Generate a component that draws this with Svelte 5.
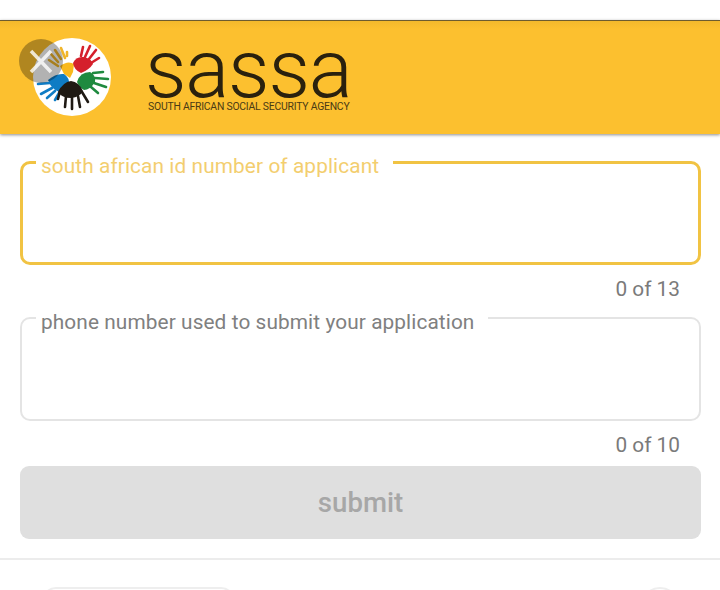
<script>
  const fields = [
    { label: 'south african id number of applicant', count: '0 of 13', active: true },
    { label: 'phone number used to submit your application', count: '0 of 10', active: false }
  ];
</script>

<div class="page">
  <header class="bar">
    <div class="logo">
      <svg viewBox="32 38 80 80" width="80" height="80" aria-hidden="true">
        <circle cx="72" cy="77" r="39" fill="#fff" />
        <g fill="none" stroke-linecap="round">
          <g stroke="#f0b52a" stroke-width="2.6">
            <path d="M58 66 49 60M58 62 51 54M61 59 55 50M65 58 61 48M67 56 67 52" />
          </g>
          <path d="M60 66Q68 60 74 64L73 72 70 78 64 74Z" fill="#f9b91c" />
          <g stroke="#d5202c" stroke-width="2.6">
            <path d="M81 56 83 47M85 57 90 46M89 59 96 50M91 63 99 58" />
          </g>
          <path d="M73 63Q76 56 84 57 92 59 93 64 89 70 81 73 74 70 73 63Z" fill="#d5202c" />
          <g stroke="#1f8a3f" stroke-width="2.6">
            <path d="M93 73 103 72M95 78 108 79M94 83 106 87M91 87 98 93" />
          </g>
          <path d="M77 82Q80 72 90 72 96 75 95 82 90 90 84 90 79 87 77 82Z" fill="#1f8a3f" />
          <g stroke="#0f7cc4" stroke-width="2.6">
            <path d="M50 83 38 84M52 88 41 94M55 91 47 98M59 93 55 100" />
          </g>
          <path d="M48 80Q56 73 64 74 70 78 69 85 63 93 57 91 51 88 48 80Z" fill="#0f7cc4" />
          <g stroke="#1f1a14" stroke-width="2.6">
            <path d="M60 91 58 99M66 96 65 107M72 97 72 109M78 96 80 107M82 92 88 102" />
          </g>
          <path d="M58 92Q63 82 71 81 79 82 83 91 80 97 71 98 62 98 58 92Z" fill="#1f1a14" />
        </g>
      </svg>
      <span class="close">
        <svg viewBox="0 0 44 44" width="44" height="44" aria-hidden="true">
          <path d="M12 12 32 33M32 12 12 33" stroke="#fff" stroke-opacity=".8" stroke-width="3.5" fill="none" />
        </svg>
      </span>
    </div>
    <div class="brand">
      <div class="name">sassa</div>
      <div class="tag">SOUTH AFRICAN SOCIAL SECURITY AGENCY</div>
    </div>
  </header>

  <form class="form" onsubmit={(e) => e.preventDefault()}>
    {#each fields as f}
      <div class="group" class:first={f.active}>
        <fieldset class="box" class:active={f.active}>
          <legend>{f.label}</legend>
          <input type="text" aria-label={f.label} />
        </fieldset>
        <div class="count">{f.count}</div>
      </div>
    {/each}
    <button class="submit" type="submit" disabled>submit</button>
  </form>

  <hr class="rule" />

  <footer class="foot">
    <span class="pill"></span>
    <span class="round"></span>
  </footer>
</div>

<style>
  :global(body) {
    margin: 0;
    background: #fff;
    overflow: hidden;
  }
  .page {
    height: 590px;
    overflow: hidden;
    padding-top: 20px;
    box-sizing: border-box;
    font-family: Roboto, "Liberation Sans", sans-serif;
  }
  .bar {
    height: 114px;
    box-sizing: border-box;
    border-top: 1px solid #6d5c30;
    background: linear-gradient(#f3b92c, #fcc02f 8px);
    box-shadow: 0 1px 3px rgba(0, 0, 0, 0.45);
    display: flex;
    align-items: flex-start;
    padding: 17px 0 0 32px;
  }
  .logo {
    position: relative;
    width: 80px;
    height: 80px;
    flex: none;
  }
  .logo > svg {
    display: block;
  }
  .close {
    position: absolute;
    left: -13px;
    top: 1px;
    width: 44px;
    height: 44px;
    border-radius: 50%;
    background: rgba(0, 0, 0, 0.3);
  }
  .close svg {
    display: block;
  }
  .brand {
    margin-left: 36px;
    color: #2a210e;
  }
  .name {
    font-size: 82px;
    font-weight: 300;
    line-height: 63px;
    height: 63px;
    letter-spacing: -1.2px;
    margin-left: -3px;
    white-space: nowrap;
  }
  .tag {
    font-size: 10.4px;
    line-height: 12px;
    letter-spacing: -0.22px;
    white-space: nowrap;
    color: #4a3b14;
  }
  .form {
    padding: 13px 19px 0 20px;
    display: flex;
    flex-direction: column;
  }
  .group {
    display: flex;
    flex-direction: column;
    margin-top: -1px;
  }
  .group.first {
    margin-top: 0;
  }
  .box {
    margin: 0;
    padding: 0 14px;
    height: 120px;
    box-sizing: border-box;
    border: 2px solid #e4e4e4;
    border-radius: 10px;
    min-width: 0;
    display: block;
  }
  .box.active {
    height: 118px;
    padding: 0 13px;
    border: 3px solid #f1c343;
  }
  legend {
    padding: 9px 14px 0 5px;
    font-size: 20.8px;
    line-height: 24px;
    color: #808080;
    letter-spacing: 0.1px;
    white-space: nowrap;
  }
  .active legend {
    padding-top: 7px;
    color: #f3ce6f;
  }
  input {
    border: 0;
    outline: 0;
    background: transparent;
    width: 100%;
    height: 40px;
    padding: 0;
    display: block;
  }
  .count {
    text-align: right;
    font-size: 20.8px;
    line-height: 24px;
    height: 38px;
    padding: 12px 21px 0 0;
    box-sizing: border-box;
    color: #7a7a7a;
  }
  .first .count {
    height: 37px;
  }
  .submit {
    margin-top: 7px;
    height: 73px;
    border: 0;
    border-radius: 9px;
    background: #dfdfdf;
    color: #a7a7a7;
    font-family: inherit;
    font-size: 27.6px;
    font-weight: 500;
    padding: 0;
  }
  .rule {
    margin: 19px 0 0;
    border: 0;
    height: 2px;
    background: #ececec;
  }
  .foot {
    display: flex;
    justify-content: space-between;
    padding: 27px 40px 0 42px;
  }
  .pill {
    width: 193px;
    height: 40px;
    box-sizing: border-box;
    border: 2px solid #eeeeee;
    border-radius: 14px;
  }
  .round {
    width: 40px;
    height: 40px;
    box-sizing: border-box;
    border: 2px solid #eeeeee;
    border-radius: 50%;
  }
</style>
